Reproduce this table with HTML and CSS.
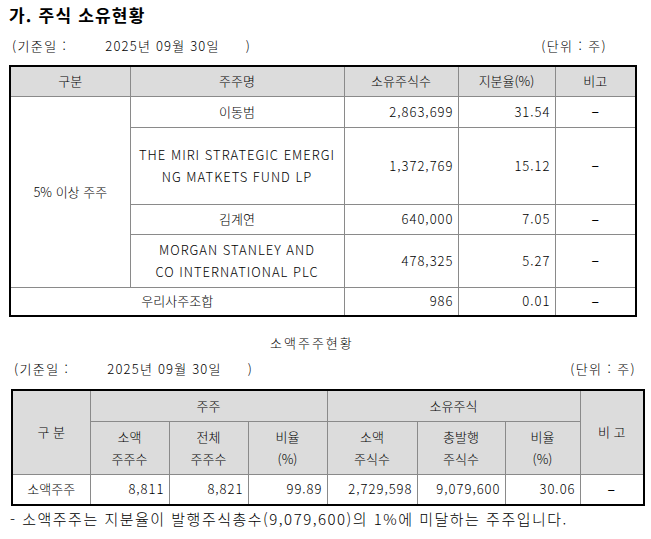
FILE: index.html
```html
<!DOCTYPE html>
<html lang="ko">
<head>
<meta charset="utf-8">
<link rel="stylesheet" href="styles.css">
</head>
<body>
<div class="page">
  <h1 class="title">가. 주식 소유현황</h1>
  <div class="meta meta-1">
    <span class="base">(기준일 :<span class="date">2025년 09월 30일</span><span class="close">)</span></span>
    <span class="unit">(단위 : 주)</span>
  </div>
  <table class="t1">
    <colgroup>
      <col class="c1"><col class="c2"><col class="c3"><col class="c4"><col class="c5">
    </colgroup>
    <thead>
      <tr class="h"><th>구분</th><th>주주명</th><th>소유주식수</th><th>지분율(%)</th><th>비고</th></tr>
    </thead>
    <tbody>
      <tr class="r1"><td rowspan="4" class="ctr">5% 이상 주주</td><td class="ctr">이동범</td><td class="num">2,863,699</td><td class="num">31.54</td><td class="ctr"><span class="dash">-</span></td></tr>
      <tr class="r2"><td class="ctr latin">THE MIRI STRATEGIC EMERGI<br>NG MATKETS FUND LP</td><td class="num">1,372,769</td><td class="num">15.12</td><td class="ctr"><span class="dash">-</span></td></tr>
      <tr class="r3"><td class="ctr">김계연</td><td class="num">640,000</td><td class="num">7.05</td><td class="ctr"><span class="dash">-</span></td></tr>
      <tr class="r4"><td class="ctr latin">MORGAN STANLEY AND<br>CO INTERNATIONAL PLC</td><td class="num">478,325</td><td class="num">5.27</td><td class="ctr"><span class="dash">-</span></td></tr>
      <tr class="r5"><td colspan="2" class="ctr">우리사주조합</td><td class="num">986</td><td class="num">0.01</td><td class="ctr"><span class="dash">-</span></td></tr>
    </tbody>
  </table>
  <div class="subtitle">소액주주현황</div>
  <div class="meta meta-2">
    <span class="base">(기준일 :<span class="date">2025년 09월 30일</span><span class="close">)</span></span>
    <span class="unit">(단위 : 주)</span>
  </div>
  <table class="t2">
    <colgroup>
      <col class="d1"><col class="d2"><col class="d3"><col class="d4"><col class="d5"><col class="d6"><col class="d7"><col class="d8">
    </colgroup>
    <thead>
      <tr class="g1"><th rowspan="2">구 분</th><th colspan="3">주주</th><th colspan="3">소유주식</th><th rowspan="2">비 고</th></tr>
      <tr class="g2"><th>소액<br>주주수</th><th>전체<br>주주수</th><th>비율<br>(%)</th><th>소액<br>주식수</th><th>총발행<br>주식수</th><th>비율<br>(%)</th></tr>
    </thead>
    <tbody>
      <tr class="g3"><td class="ctr">소액주주</td><td class="num">8,811</td><td class="num">8,821</td><td class="num">99.89</td><td class="num">2,729,598</td><td class="num">9,079,600</td><td class="num">30.06</td><td class="ctr"><span class="dash">-</span></td></tr>
    </tbody>
  </table>
  <p class="note">- 소액주주는 지분율이 발행주식총수(9,079,600)의 1%에 미달하는 주주입니다.</p>
</div>
</body>
</html>
```

FILE: styles.css
```css
* { box-sizing: border-box; }
html, body { margin: 0; padding: 0; background: #fff; }
body {
  font-family: "Noto Sans CJK KR", "Noto Sans", sans-serif;
  font-size: 13px;
  font-weight: 300;
  color: #000;
}
.page { width: 651px; height: 539px; padding: 0 0 0 9px; position: relative; }
.title {
  margin: 0;
  padding-top: 4px;
  height: 30px;
  font-size: 17px;
  font-weight: bold;
  line-height: 22px;
  letter-spacing: 1.2px;
}
.meta {
  display: flex;
  justify-content: space-between;
  align-items: center;
  line-height: 18px;
  letter-spacing: 1.4px;
}
.meta-1 { padding: 0 44px 0 3px; height: 31px; margin-bottom: 4px; }
.meta-2 { padding: 0 15px 0 5px; height: 22px; margin-bottom: 9px; }
.date { margin-left: 38px; letter-spacing: 1.2px; }
.close { margin-left: 26px; }
.unit { letter-spacing: 1.4px; }
table {
  border-collapse: collapse;
  table-layout: fixed;
  border: 2px solid #000;
}
th, td {
  border: 1px solid #8a8a8a;
  padding: 0 4px;
  font-weight: 300;
  line-height: 22px;
  vertical-align: middle;
}
th { background: #dcdcdc; text-align: center; }
.ctr { text-align: center; }
.dash {
  display: inline-block;
  font-family: "DejaVu Sans", sans-serif;
  font-weight: normal;
  transform: scaleX(1.8);
}
.latin { letter-spacing: 1px; }
.num { text-align: right; letter-spacing: 1px; }
.t1 { width: 626px; }
.t1 .c1 { width: 120px; }
.t1 .c2 { width: 214px; }
.t1 .c3 { width: 114px; }
.t1 .c4 { width: 97px; }
.t1 .c5 { width: 81px; }
.t1 .h { height: 30px; }
.t1 .r1 { height: 31px; }
.t1 .r2 { height: 77px; }
.t1 .r3 { height: 30px; }
.t1 .r4 { height: 53px; }
.t1 .r5 { height: 29px; }
.subtitle {
  padding-left: 261px;
  margin-top: 16px;
  height: 25px;
  line-height: 20px;
  letter-spacing: 2px;
}
.t2 { width: 632px; margin-left: 2px; }
.t2 .d1 { width: 78px; }
.t2 .d2 { width: 79px; }
.t2 .d3 { width: 79px; }
.t2 .d4 { width: 79px; }
.t2 .d5 { width: 90px; }
.t2 .d6 { width: 88px; }
.t2 .d7 { width: 75px; }
.t2 .d8 { width: 64px; }
.t2 .g1 { height: 31px; }
.t2 .g2 { height: 53px; }
.t2 .g3 { height: 31px; }
.note {
  margin: 3px 0 0 1px;
  font-size: 15px;
  line-height: 20px;
  letter-spacing: 1.5px;
}
```
